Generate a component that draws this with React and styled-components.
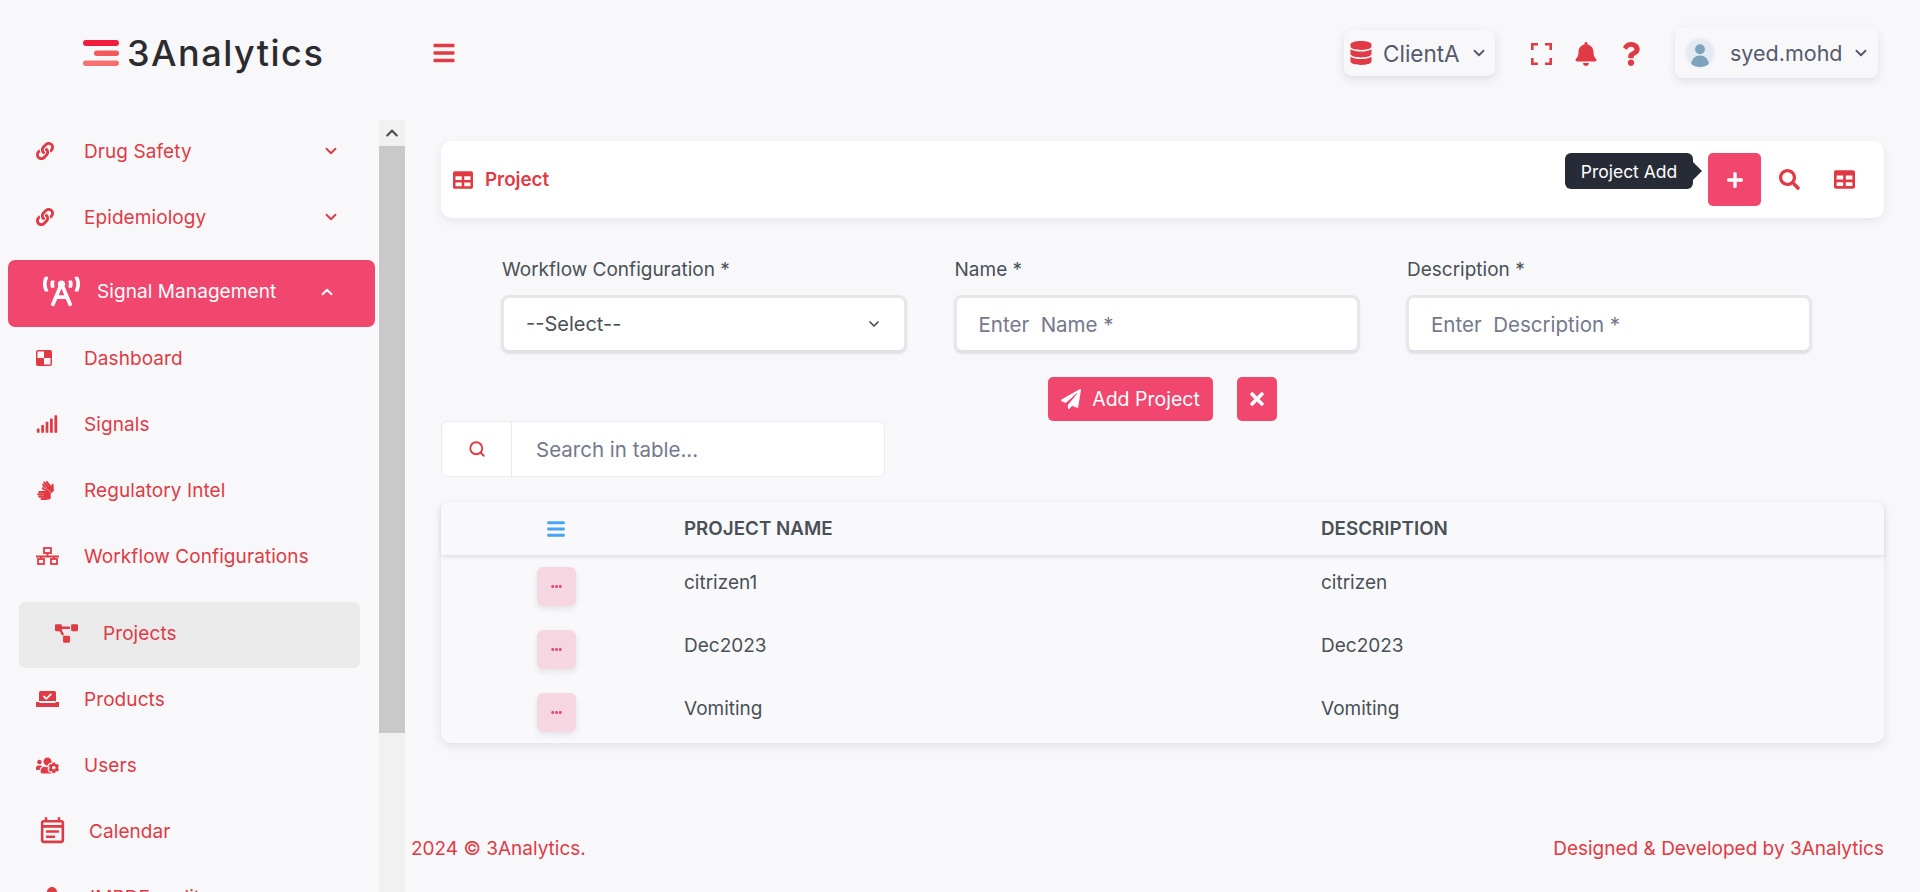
import React from 'react';
import styled, { createGlobalStyle } from 'styled-components';
import {
  FaLink, FaBroadcastTower, FaSignal, FaSignLanguage, FaProjectDiagram, FaUsersCog, FaDatabase,
  FaBell, FaQuestion, FaTable, FaSearch, FaPlus, FaPaperPlane, FaTimes, FaBars, FaEllipsisH, FaChevronUp, FaUserMd,
} from 'react-icons/fa';
import { MdOutlineEventNote } from 'react-icons/md';
import { LuChevronDown, LuChevronUp, LuSearch } from 'react-icons/lu';

const RED = '#e03a45';
const PINK = '#f1476f';
const FONT = `Inter, "Liberation Sans", sans-serif`;

const Global = createGlobalStyle`
  html, body { margin: 0; padding: 0; height: 100%; overflow: hidden; background: #f8f8fb; }
  * { box-sizing: border-box; }
  body { font-family: ${FONT}; }
`;

const Page = styled.div`
  width: 1920px; height: 892px; overflow: hidden; display: flex; flex-direction: column; background: #f8f8fb;
`;
const Header = styled.header`
  height: 120px; flex: none; display: flex; align-items: flex-start; padding: 0 42px 0 83px; position: relative;
`;
const Logo = styled.div`
  display: flex; align-items: center; gap: 8px; height: 40px; margin-top: 33px; width: 349px;
`;
const LogoWord = styled.span`
  font-size: 36px; font-weight: 500; letter-spacing: 1.5px; color: #2b2b30; line-height: 40px;
`;
const Burger = styled.button`
  all: unset; color: ${RED}; display: flex; margin-top: 40px; font-size: 24px; width: 24px; height: 26px; align-items: center;
`;
const HeaderRight = styled.div`
  margin-left: auto; display: flex; align-items: flex-start;
`;
const ClientBox = styled.div`
  width: 151px; height: 46px; margin-top: 30px; border-radius: 8px; background: #f8f8fb; box-shadow: 0 3px 8px rgba(70,80,110,.16);
  display: flex; align-items: center; padding-left: 5px; color: #545a6d; font-size: 22.5px; gap: 10px;
  svg:first-child { color: ${RED}; font-size: 24px; }
`;
const ClientName = styled.span` width: 77px; `;
const TopIcons = styled.div`
  display: flex; align-items: center; margin: 41px 34px 0 36px; color: ${RED}; height: 26px;
`;
const TopIcon = styled.span`
  display: flex; justify-content: center; font-size: ${p => p.$size || 24}px; width: ${p => p.$w}px; margin-right: ${p => p.$gap || 0}px;
`;
const UserBox = styled.div`
  width: 203px; height: 51px; margin-top: 27px; border-radius: 8px; background: #f8f8fb; box-shadow: 0 3px 8px rgba(70,80,110,.14);
  display: flex; align-items: center; padding-left: 11px; color: #545a6d; font-size: 21.5px;
`;
const Avatar = styled.span`
  width: 28px; height: 28px; display: flex; border-radius: 50%; box-shadow: 0 0 0 2px #f2f3f6; margin-right: 16px; overflow: hidden;
`;
const UserName = styled.span` width: 122px; `;

const Body = styled.div` flex: 1; display: flex; min-height: 0; `;
const Sidebar = styled.aside` width: 405px; flex: none; display: flex; min-height: 0; `;
const Nav = styled.nav`
  width: 379px; flex: none; overflow: hidden; padding-top: 4px; display: flex; flex-direction: column; gap: 12px;
`;
const Row = styled.a`
  height: 54px; flex: none; display: flex; align-items: center; padding: 0 39px 0 36px; color: ${RED};
  font-size: 19px; letter-spacing: 0.08px;
`;
const ActiveRow = styled.a`
  height: 67px; flex: none; display: flex; align-items: center; margin: 4px 4px -8px 8px; padding: 0 39px 4px 35px;
  background: ${PINK}; color: #fff; border-radius: 7px; font-size: 19px; letter-spacing: 0.08px;
`;
const SubRow = styled.a`
  height: 66px; flex: none; display: flex; align-items: center; margin: 7px 19px -8px 19px; padding: 0 0 4px 36px;
  background: #eaeaea; color: ${RED}; border-radius: 6px; font-size: 19px; letter-spacing: 0.08px;
`;
const IconSlot = styled.span`
  width: ${p => p.$w || 48}px; flex: none; display: flex; font-size: ${p => p.$size || 18}px; margin-left: ${p => p.$ml || 0}px;
`;
const Caret = styled.span` margin-left: auto; display: flex; font-size: 18px; `;

const Scroll = styled.div` width: 26px; flex: none; background: #f1f1f1; display: flex; flex-direction: column; `;
const ScrollUp = styled.div`
  height: 26px; display: flex; align-items: center; justify-content: center; color: #505050; font-size: 14px;
`;
const ScrollThumb = styled.div` height: 587px; background: #c9c9c9; `;

const Main = styled.main` flex: 1; min-width: 0; display: flex; flex-direction: column; padding: 21px 36px 0; `;
const Card = styled.section`
  height: 77px; flex: none; background: #fff; border-radius: 10px; box-shadow: 0 3px 8px rgba(70,80,110,.1);
  display: flex; align-items: center; padding: 0 29px 0 12px;
`;
const CardTitle = styled.h1`
  margin: 0; display: flex; align-items: center; gap: 12px; color: ${RED}; font-size: 18.8px; font-weight: 600;
  svg { font-size: 20px; }
`;
const Tools = styled.div` margin-left: auto; display: flex; align-items: center; position: relative; color: ${RED}; `;
const AddTool = styled.button`
  all: unset; width: 53px; height: 53px; background: ${PINK}; color: #fff; border-radius: 5px; display: flex; align-items: center; justify-content: center; font-size: 18px;
`;
const ToolIcon = styled.span` display: flex; font-size: 21px; margin-left: ${p => p.$ml}px; `;
const Tooltip = styled.div`
  position: absolute; right: 162px; top: 0; width: 128px; height: 36px; background: #272b36; color: #fff; border-radius: 6px;
  font-size: 17.5px; display: flex; align-items: center; justify-content: center;
  &::after {
    content: ''; position: absolute; left: 100%; top: 9px; border-left: 9px solid #272b36; border-top: 9px solid transparent; border-bottom: 9px solid transparent;
  }
`;

const Form = styled.form`
  margin-top: 41px; padding: 0 72px 0 60px; display: grid; grid-template-columns: repeat(3, 1fr); column-gap: 46.5px;
`;
const Field = styled.div` display: flex; flex-direction: column; gap: 14px; `;
const Label = styled.label` font-size: 19px; line-height: 22px; color: #495057; padding-left: 1px; `;
const inputBox = `
  height: 58px; width: 100%; background: #fff; border: 3px solid #e6e7ea; border-bottom-color: #dfe1e6; border-radius: 8px;
  box-shadow: 0 1px 2px rgba(70,80,110,.12);
  font-family: ${FONT}; font-size: 20.5px; padding: 0 22px; display: flex; align-items: center; outline: none;
`;
const Select = styled.div`
  ${inputBox}
  color: #495057; justify-content: space-between; padding-right: 22px; font-size: 20px;
`;
const Input = styled.input`
  ${inputBox}
  color: #495057;
  &::placeholder { color: #74788d; opacity: 1; }
`;
const Actions = styled.div` display: flex; justify-content: center; gap: 24px; margin-top: 24px; `;
const PinkButton = styled.button`
  all: unset; height: 44px; background: ${PINK}; color: #fff; border-radius: 5px; display: flex; align-items: center; justify-content: center;
  width: ${p => p.$w}px; gap: 11px; font-family: ${FONT}; font-size: 19.5px; svg { font-size: 20px; }
`;
const SearchBar = styled.div`
  width: 444px; height: 56px; flex: none; background: #fff; border: 1px solid #e9ebf1; border-radius: 6px; display: flex;
`;
const SearchAddon = styled.span`
  width: 70px; flex: none; border-right: 1px solid #e9ebf1; display: flex; align-items: center; justify-content: center; color: ${RED}; font-size: 18px;
`;
const SearchInput = styled.input`
  flex: 1; min-width: 0; border: 0; background: none; outline: none; padding: 0 24px; font-family: ${FONT}; font-size: 20.5px;
  &::placeholder { color: #74788d; opacity: 1; }
`;
const Table = styled.div`
  margin-top: 25px; border-radius: 10px; background: #f9f9fb; box-shadow: 0 3px 8px rgba(70,80,110,.14);
  flex: none; height: 241px;
`;
const Columns = `display: grid; grid-template-columns: 230px 637px 1fr; column-gap: 0;`;
const HeadRow = styled.div`
  ${Columns}
  height: 53px; align-items: center; box-shadow: 0 2px 4px rgba(70,80,110,.14); color: #495057;
  font-size: 18.8px; font-weight: 600;
`;
const HeadIcon = styled.span` display: flex; justify-content: center; color: #4aa3f2; font-size: 20px; `;
const Cell = styled.div` padding-left: ${p => p.$pad}px; `;
const BodyRow = styled.div`
  ${Columns}
  height: 63px; padding-top: 12px; color: #495057; font-size: 19px; line-height: 32px;
`;
const DotsButton = styled.button`
  all: unset; justify-self: center; width: 39px; height: 39px; border-radius: 6px; background: #f6d7e1; color: ${PINK}; font-size: 11px;
  display: flex; align-items: center; justify-content: center; box-shadow: 0 3px 6px rgba(70,80,110,.12);
`;
const Footer = styled.footer`
  margin: auto 0 32px -30px; display: flex; justify-content: space-between; color: ${RED}; font-size: 19px; line-height: 22px;
`;

const LogoMark = () => (
  <svg width="36" height="26" viewBox="0 0 36 26">
    <rect x="0" y="0" width="36" height="6" rx="3" fill="#f01e3c" />
    <rect x="11" y="10.5" width="25" height="5.5" rx="2.7" fill="#f4595c" />
    <rect x="0" y="20.5" width="36" height="5.5" rx="2.7" fill="#f97070" />
  </svg>
);
const ChessIcon = () => (
  <svg width="16" height="16" viewBox="0 0 16 16">
    <rect width="16" height="16" rx="2" fill={RED} />
    <rect x="1.5" y="1.5" width="6.5" height="6.5" fill="#f8f8fb" />
    <rect x="8" y="8" width="6.5" height="6.5" fill="#f8f8fb" />
  </svg>
);
const NetworkIcon = () => (
  <svg width="23" height="18" viewBox="0 0 23 18" fill="none" stroke={RED} strokeWidth="1.8">
    <rect x="8" y="1" width="7" height="5" />
    <rect x="2" y="12" width="6" height="5" />
    <rect x="15" y="12" width="6" height="5" />
    <path d="M0 9.5h23M11.5 6v3.5M5 9.5V12M18 9.5V12" />
  </svg>
);
const LaptopCheckIcon = () => (
  <svg width="23" height="16" viewBox="0 0 23 16">
    <path d="M3 1.5A1.5 1.5 0 0 1 4.5 0h14A1.5 1.5 0 0 1 20 1.5V10H3z" fill={RED} />
    <path d="M7.5 5l2.8 2.8 5-5" fill="none" stroke="#f8f8fb" strokeWidth="1.8" />
    <path d="M0 11h3.5v1h16v-1H23v5H0z" fill={RED} />
  </svg>
);
const FullscreenIcon = () => (
  <svg width="21" height="22" viewBox="0 0 21 22" fill="none" stroke={RED} strokeWidth="2.6">
    <path d="M1.3 7V1.3H7M14 1.3h5.7V7M19.7 15v5.7H14M7 20.7H1.3V15" />
  </svg>
);
const AvatarIcon = () => (
  <svg width="28" height="28" viewBox="0 0 34 34">
    <rect width="34" height="34" fill="#e3eaf1" />
    <circle cx="17" cy="12.5" r="6" fill="#7ea2bb" />
    <path d="M6 34c0-9 4-14 11-14s11 5 11 14z" fill="#7ea2bb" />
  </svg>
);

const items = [
  { label: 'Dashboard', icon: <ChessIcon /> },
  { label: 'Signals', icon: <FaSignal />, size: 22 },
  { label: 'Regulatory Intel', icon: <FaSignLanguage />, size: 19 },
  { label: 'Workflow Configurations', icon: <NetworkIcon /> },
];
const items2 = [
  { label: 'Products', icon: <LaptopCheckIcon /> },
  { label: 'Users', icon: <FaUsersCog />, size: 23 },
];

const rows = ['citrizen1', 'Dec2023', 'Vomiting'];

export default function App() {
  return (
    <Page>
      <Global />
      <Header>
        <Logo><LogoMark /><LogoWord>3Analytics</LogoWord></Logo>
        <Burger aria-label="menu"><FaBars /></Burger>
        <HeaderRight>
          <ClientBox><FaDatabase /><ClientName>ClientA</ClientName><LuChevronDown size={18} strokeWidth={2.5} /></ClientBox>
          <TopIcons>
            <TopIcon $w={21} $gap={23}><FullscreenIcon /></TopIcon>
            <TopIcon $w={22} $gap={24}><FaBell /></TopIcon>
            <TopIcon $w={20}><FaQuestion /></TopIcon>
          </TopIcons>
          <UserBox>
            <Avatar><AvatarIcon /></Avatar>
            <UserName>syed.mohd</UserName>
            <LuChevronDown size={18} strokeWidth={2.5} />
          </UserBox>
        </HeaderRight>
      </Header>
      <Body>
        <Sidebar>
          <Nav>
            <Row><IconSlot><FaLink /></IconSlot>Drug Safety<Caret><LuChevronDown strokeWidth={2.5} /></Caret></Row>
            <Row><IconSlot><FaLink /></IconSlot>Epidemiology<Caret><LuChevronDown strokeWidth={2.5} /></Caret></Row>
            <ActiveRow><IconSlot $w={54} $size={37}><FaBroadcastTower /></IconSlot>Signal Management<Caret><LuChevronUp strokeWidth={2.5} /></Caret></ActiveRow>
            {items.map(i => <Row key={i.label}><IconSlot $size={i.size}>{i.icon}</IconSlot>{i.label}</Row>)}
            <SubRow><IconSlot $size={23}><FaProjectDiagram /></IconSlot>Projects</SubRow>
            {items2.map(i => <Row key={i.label}><IconSlot $size={i.size}>{i.icon}</IconSlot>{i.label}</Row>)}
            <Row><IconSlot $w={52} $ml={1} $size={31}><MdOutlineEventNote /></IconSlot>Calendar</Row>
            <Row><IconSlot $w={48} $ml={6} $size={20}><FaUserMd /></IconSlot>IMPDE audit</Row>
          </Nav>
          <Scroll>
            <ScrollUp><FaChevronUp /></ScrollUp>
            <ScrollThumb />
          </Scroll>
        </Sidebar>
        <Main>
          <Card>
            <CardTitle><FaTable />Project</CardTitle>
            <Tools>
              <Tooltip>Project Add</Tooltip>
              <AddTool aria-label="add"><FaPlus /></AddTool>
              <ToolIcon $ml={18}><FaSearch /></ToolIcon>
              <ToolIcon $ml={34}><FaTable /></ToolIcon>
            </Tools>
          </Card>
          <Form>
            <Field>
              <Label>Workflow Configuration *</Label>
              <Select>--Select--<LuChevronDown size={16} strokeWidth={2.5} /></Select>
            </Field>
            <Field>
              <Label>Name *</Label>
              <Input placeholder="Enter  Name *" />
            </Field>
            <Field>
              <Label>Description *</Label>
              <Input placeholder="Enter  Description *" />
            </Field>
          </Form>
          <Actions>
            <PinkButton type="button" $w={165}><FaPaperPlane />Add Project</PinkButton>
            <PinkButton type="button" $w={40} aria-label="close"><FaTimes /></PinkButton>
          </Actions>
          <SearchBar>
            <SearchAddon><LuSearch strokeWidth={2.5} /></SearchAddon>
            <SearchInput placeholder="Search in table..." />
          </SearchBar>
          <Table>
            <HeadRow>
              <HeadIcon><FaBars /></HeadIcon>
              <Cell $pad={13}>PROJECT NAME</Cell>
              <Cell $pad={13}>DESCRIPTION</Cell>
            </HeadRow>
            {rows.map(r => (
              <BodyRow key={r}>
                <DotsButton aria-label="actions"><FaEllipsisH /></DotsButton>
                <Cell $pad={13}>{r}</Cell>
                <Cell $pad={13}>{r === 'citrizen1' ? 'citrizen' : r}</Cell>
              </BodyRow>
            ))}
          </Table>
          <Footer>
            <span>2024 © 3Analytics.</span>
            <span>Designed &amp; Developed by 3Analytics</span>
          </Footer>
        </Main>
      </Body>
    </Page>
  );
}
